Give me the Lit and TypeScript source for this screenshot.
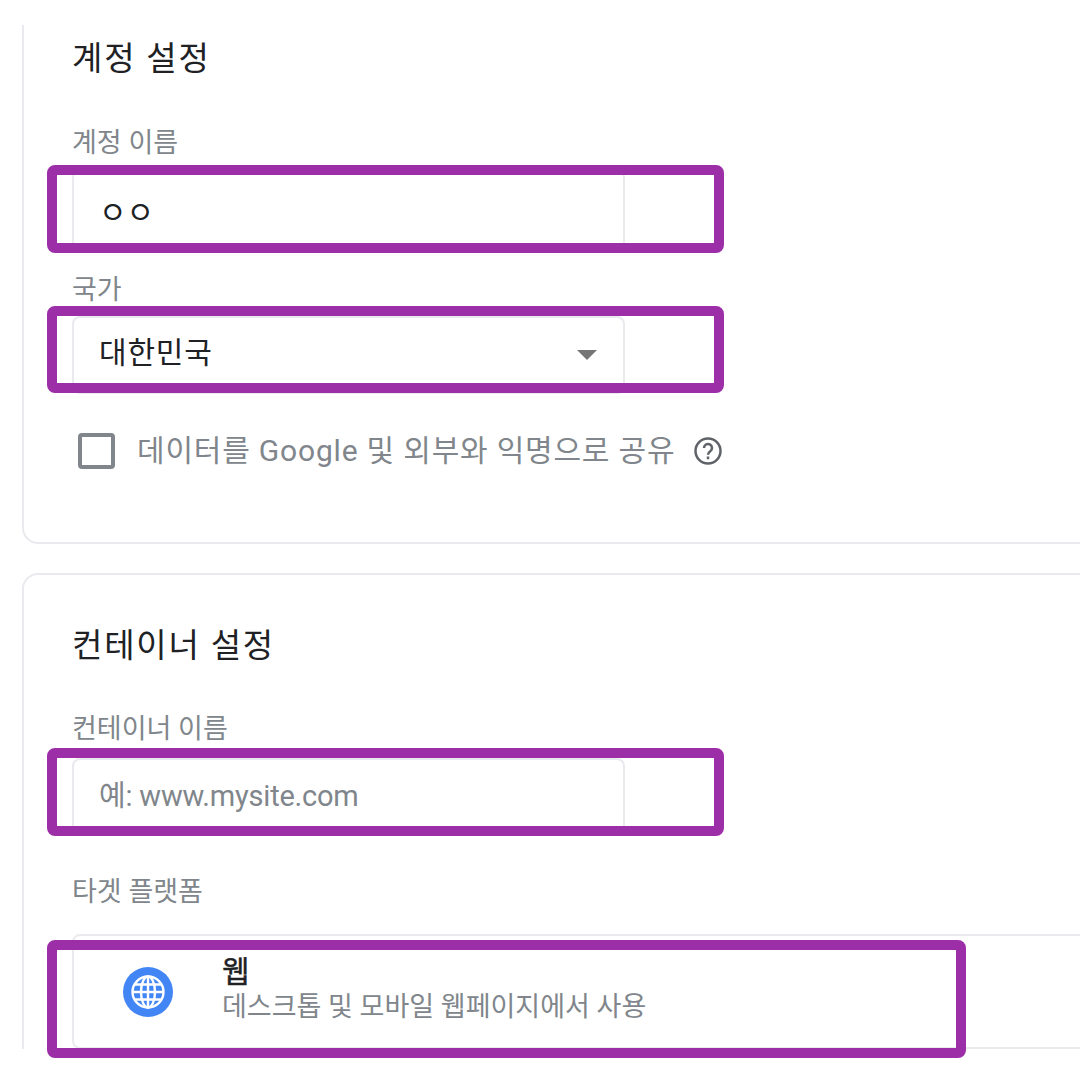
import { LitElement, css, html } from "lit";
import { customElement } from "lit/decorators.js";

@customElement("app-root")
export class AppRoot extends LitElement {
  static styles = css`
    :host {
      display: block;
      position: relative;
      width: 1080px;
      height: 1080px;
      overflow: hidden;
      background: #fff;
      font-family: Roboto, "Noto Sans CJK KR", sans-serif;
      color: #202124;
    }
    .page {
      height: 1049px;
      overflow: hidden;
      padding: 25px 0 0 22px;
      box-sizing: border-box;
      display: flex;
      flex-direction: column;
      gap: 29px;
    }
    .card {
      margin-right: -40px;
      padding-left: 48px;
      border: 2px solid #e8eaed;
      border-radius: 16px;
      box-sizing: border-box;
      flex-shrink: 0;
    }
    .card.first {
      height: 519px;
      border-top: 0;
      border-top-left-radius: 0;
      border-top-right-radius: 0;
      padding-top: 13px;
    }
    .card.second {
      height: 520px;
      padding-top: 50px;
    }
    h2 {
      margin: 0;
      font-size: 33px;
      line-height: 42px;
      font-weight: 400;
      letter-spacing: 1.8px;
    }
    .label {
      font-size: 27px;
      line-height: 34px;
      color: #80868b;
    }
    .first .name-label { margin-top: 46px; }
    .first .country-label { margin-top: 23px; }
    .second .name-label { margin-top: 45px; }
    .field {
      width: 553px;
      box-sizing: border-box;
      border: 2px solid #e8eaed;
      border-radius: 8px;
      padding-left: 25px;
      display: flex;
      align-items: center;
      font-size: 30px;
    }
    .field.name { height: 80px; margin-top: 10px; }
    .field.country {
      height: 78px;
      margin-top: 9px;
      padding-bottom: 10px;
      justify-content: space-between;
      padding-right: 26px;
      letter-spacing: 0.8px;
    }
    .field.site { height: 76px; margin-top: 12px; padding-bottom: 6px; }
    .arrow {
      width: 0;
      height: 0;
      border-left: 10px solid transparent;
      border-right: 10px solid transparent;
      border-top: 10px solid #757575;
      margin-top: 10px;
    }
    .placeholder { color: #80868b; font-size: 29px; letter-spacing: -0.2px; }
    .share {
      display: flex;
      align-items: center;
      margin-top: 39px;
      margin-left: 6px;
    }
    .checkbox {
      width: 37px;
      height: 36px;
      box-sizing: border-box;
      border: 4px solid #80868b;
      border-radius: 4px;
      margin-right: 22px;
    }
    .share-text {
      font-size: 30px;
      line-height: 36px;
      color: #80868b;
      letter-spacing: 0.8px;
    }
    .help { margin-left: 18px; display: block; }
    .platform-label { margin-top: 41px; }
    .platform {
      margin-top: 25px;
      height: 115px;
      border: 2px solid #e8eaed;
      border-radius: 8px;
      box-sizing: border-box;
      display: flex;
      padding-left: 49px;
    }
    .globe { margin-top: 31px; flex-shrink: 0; }
    .platform-text { margin-left: 49px; margin-top: 17px; }
    .platform-name { font-size: 30px; line-height: 37px; color: #202124; -webkit-text-stroke: 0.4px #202124; }
    .platform-desc { font-size: 27px; line-height: 34px; color: #80868b; }
    .mark {
      position: absolute;
      box-sizing: border-box;
      border: 10px solid #9c2fa8;
      border-radius: 8px;
    }
    .m1 { left: 47px; top: 165px; width: 677px; height: 88px; }
    .m2 { left: 47px; top: 306px; width: 677px; height: 87px; }
    .m3 { left: 47px; top: 748px; width: 677px; height: 88px; }
    .m4 { left: 47px; top: 940px; width: 919px; height: 118px; }
  `;

  render() {
    return html`
      <div class="page">
        <section class="card first">
          <h2>계정 설정</h2>
          <div class="label name-label">계정 이름</div>
          <div class="field name">ㅇㅇ</div>
          <div class="label country-label">국가</div>
          <div class="field country">
            <span>대한민국</span>
            <span class="arrow"></span>
          </div>
          <div class="share">
            <span class="checkbox"></span>
            <span class="share-text">데이터를 Google 및 외부와 익명으로 공유</span>
            <svg class="help" width="30" height="30" viewBox="0 0 24 24" fill="none" stroke="#5f6368">
              <circle cx="12" cy="12" r="10" stroke-width="2" />
              <path d="M8.8 9.6a3.2 3.2 0 1 1 5 2.6c-1.2.8-1.8 1.4-1.8 2.8" stroke-width="2" />
              <path d="M12 16.4v2.2" stroke-width="2" />
            </svg>
          </div>
        </section>
        <section class="card second">
          <h2>컨테이너 설정</h2>
          <div class="label name-label">컨테이너 이름</div>
          <div class="field site"><span class="placeholder">예: www.mysite.com</span></div>
          <div class="label platform-label">타겟 플랫폼</div>
          <div class="platform">
            <svg class="globe" width="50" height="50" viewBox="0 0 50 50" fill="none">
              <circle cx="25" cy="25" r="25" fill="#4285f4" />
              <g stroke="#fff" stroke-width="2.4">
                <circle cx="25" cy="25" r="15.5" />
                <ellipse cx="25" cy="25" rx="7" ry="15.5" />
                <path d="M25 9.5v31M9.5 25h31M11.5 17.5h27M11.5 32.5h27" />
              </g>
            </svg>
            <div class="platform-text">
              <div class="platform-name">웹</div>
              <div class="platform-desc">데스크톱 및 모바일 웹페이지에서 사용</div>
            </div>
          </div>
        </section>
      </div>
      <div class="mark m1"></div>
      <div class="mark m2"></div>
      <div class="mark m3"></div>
      <div class="mark m4"></div>
    `;
  }
}

declare global {
  interface HTMLElementTagNameMap {
    "app-root": AppRoot;
  }
}
